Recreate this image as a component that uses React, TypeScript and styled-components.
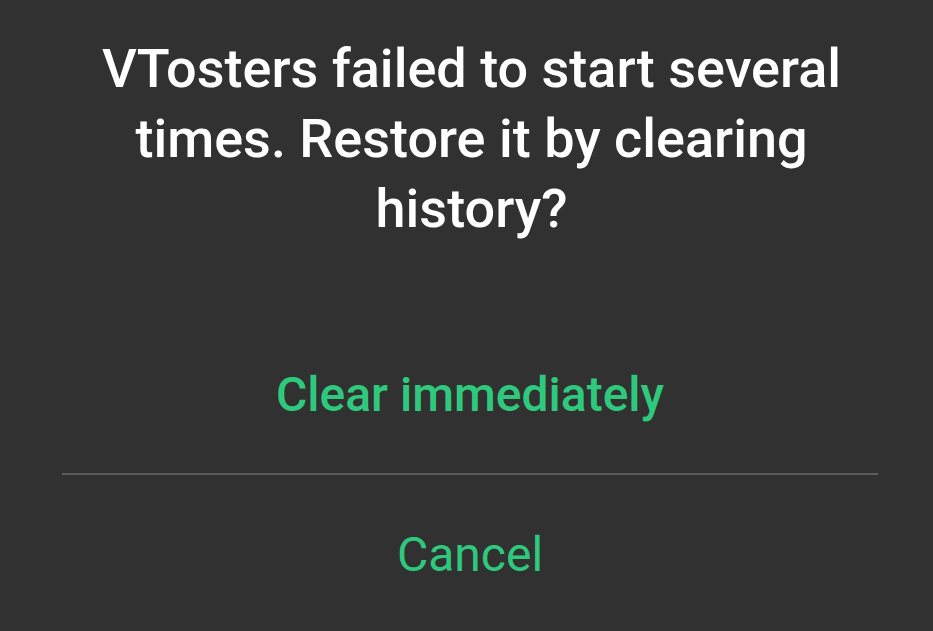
import React from "react";
import styled, { createGlobalStyle } from "styled-components";

const Global = createGlobalStyle`
  html, body { margin: 0; padding: 0; background: #313131; }
  body { font-family: Roboto, "Noto Sans", sans-serif; }
`;

const Dialog = styled.div`
  width: 933px;
  height: 631px;
  background: #313131;
  display: flex;
  flex-direction: column;
  box-sizing: border-box;
`;

const Message = styled.div`
  padding: 34px 90px 0 100px;
  color: #ffffff;
  font-size: 54px;
  font-weight: 500;
  line-height: 70px;
  text-align: center;
  height: 317px;
  box-sizing: border-box;
`;

const Action = styled.button<{ $primary?: boolean }>`
  display: flex;
  align-items: center;
  justify-content: center;
  height: 157px;
  border: none;
  background: transparent;
  color: #2fc97d;
  font-family: Roboto, "Noto Sans", sans-serif;
  font-size: 48px;
  font-weight: ${(p) => (p.$primary ? 500 : 400)};
  padding: 0 0 0 7px;
  padding-top: ${(p) => (p.$primary ? "0" : "4px")};
  box-sizing: border-box;
`;

const Divider = styled.div`
  height: 2px;
  background: #5c5c5c;
  margin: 0 55px 0 62px;
`;

export default function App() {
  return (
    <>
      <Global />
      <Dialog>
        <Message>
          VTosters failed to start several times. Restore it by clearing history?
        </Message>
        <Action $primary>Clear immediately</Action>
        <Divider />
        <Action>Cancel</Action>
      </Dialog>
    </>
  );
}
